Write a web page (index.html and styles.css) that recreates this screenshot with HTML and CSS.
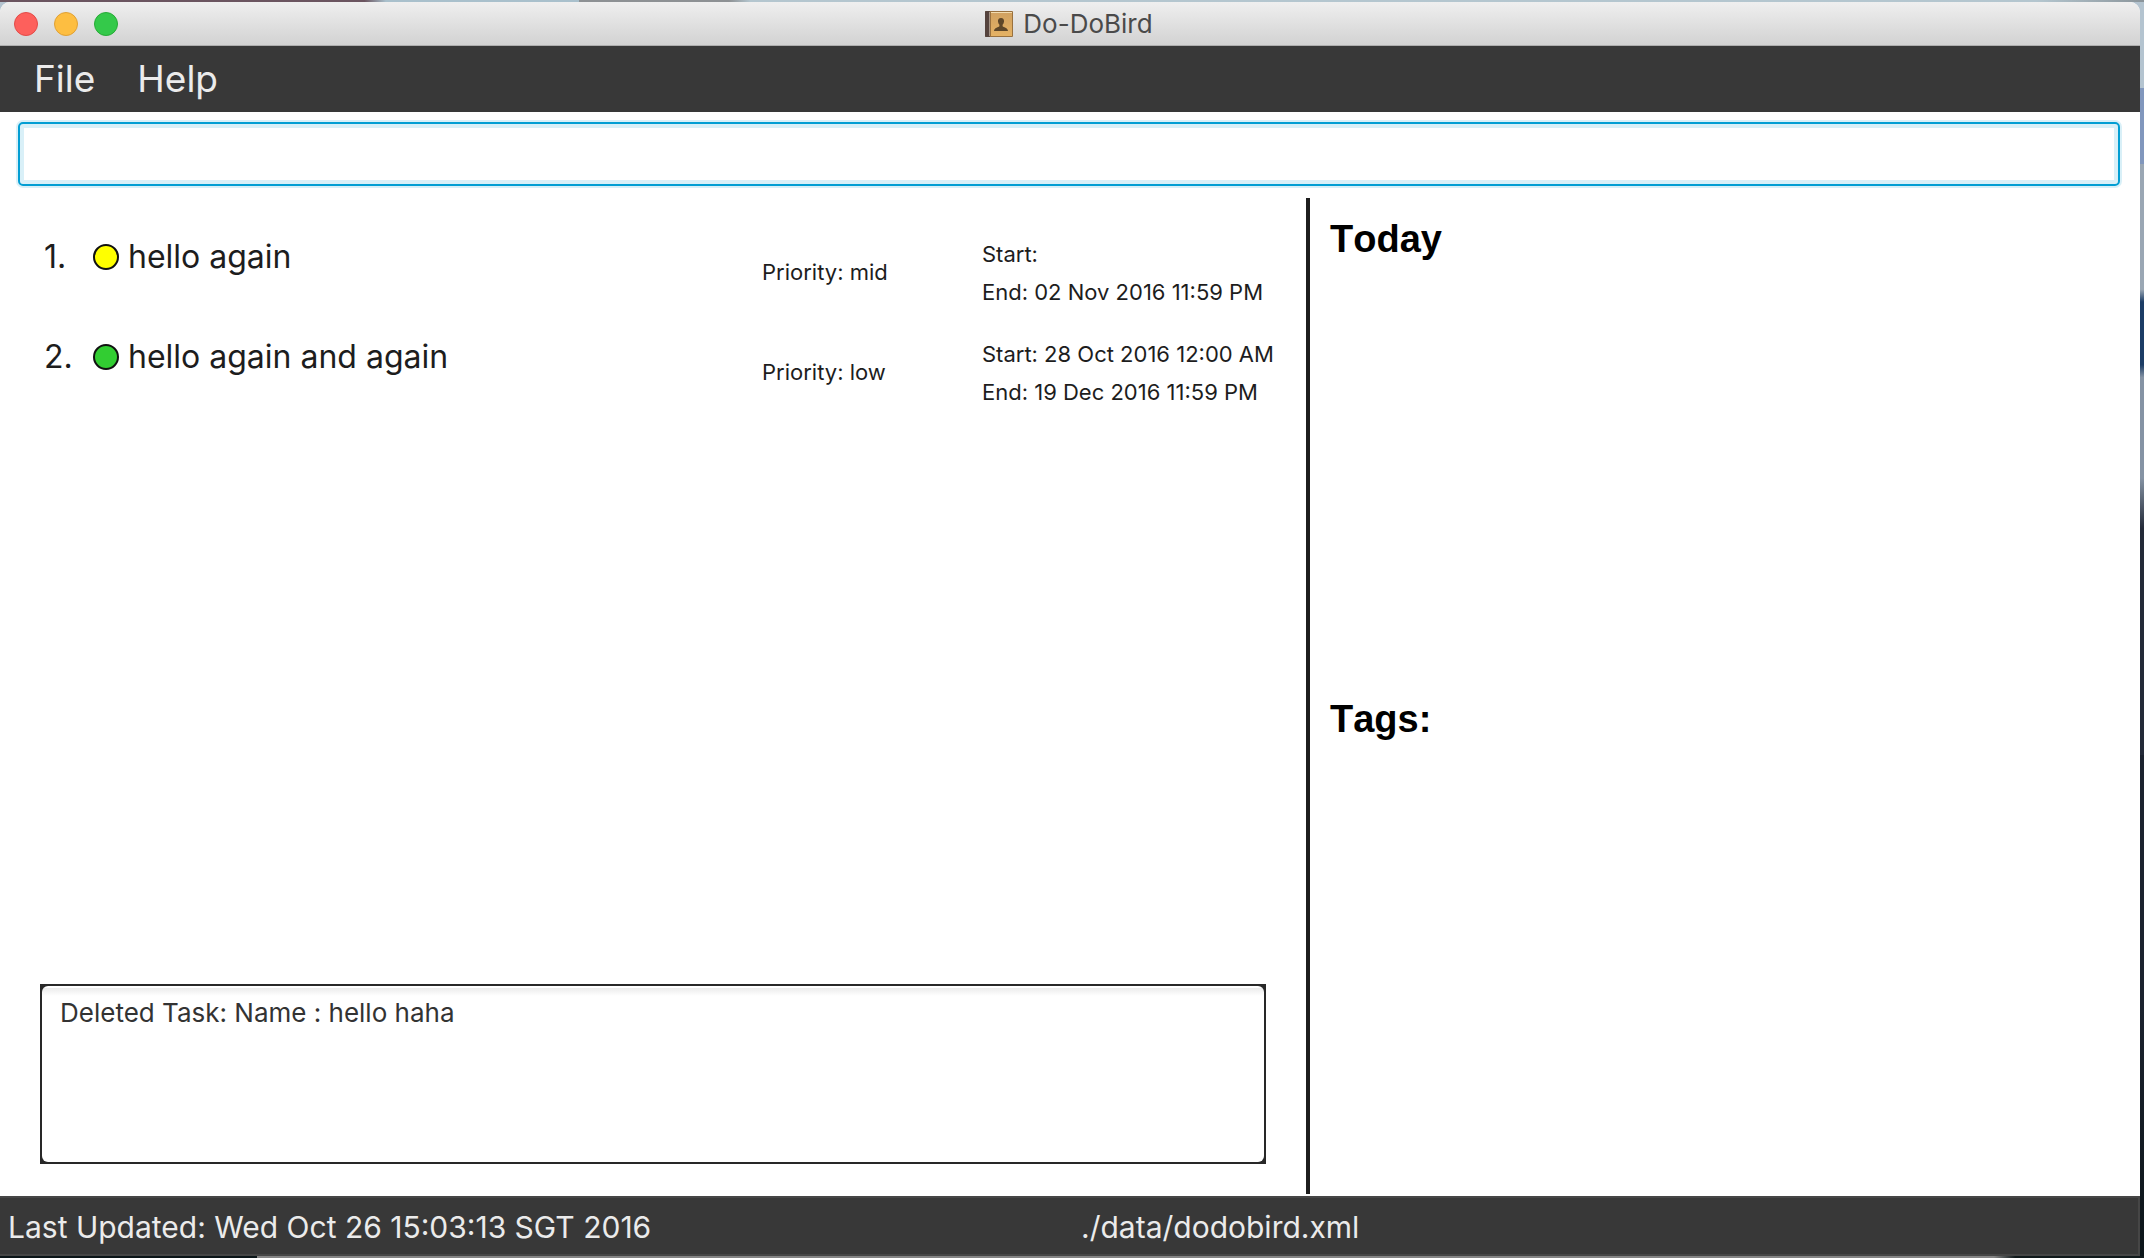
FILE: index.html
```html
<!DOCTYPE html>
<html lang="en">
<head>
<meta charset="utf-8">
<title>Do-DoBird</title>
<link rel="stylesheet" href="styles.css">
</head>
<body class="desktop">
<div class="window">
  <header class="titlebar">
    <div class="controls">
      <button class="control close" type="button" aria-label="Close"></button>
      <button class="control minimise" type="button" aria-label="Minimise"></button>
      <button class="control zoom" type="button" aria-label="Zoom"></button>
    </div>
    <div class="caption">
      <svg class="app-icon" viewBox="0 0 28 27" aria-hidden="true">
        <defs>
          <linearGradient id="cover" x1="0" y1="0" x2="0" y2="1">
            <stop offset="0" stop-color="#d0a161"/>
            <stop offset="1" stop-color="#e5b264"/>
          </linearGradient>
        </defs>
        <rect x="0" y="0" width="28" height="26" rx="1" fill="#99713e"/>
        <rect x="0" y="0" width="5" height="26" rx="1" fill="#55433d"/>
        <rect x="4" y="1" width="1" height="24" fill="#a39285"/>
        <rect x="6" y="1" width="21" height="24" fill="url(#cover)"/>
        <rect x="6" y="1" width="21" height="1" fill="#f2dcb0"/>
        <path d="M16 7c2.200 0 3.300 1.500 3 3.700-.2 1.300-.7 2.300-1.400 3v1.500c.5 1 5.400 1.300 5.400 4.800H9c0-3.500 4.900-3.800 5.400-4.800v-1.500c-.7-.7-1.200-1.700-1.400-3C12.700 8.500 13.800 7 16 7z" fill="#5e4729"/>
      </svg>
      <span>Do-DoBird</span>
    </div>
  </header>
  <nav class="menubar">
    <button class="menu" type="button">File</button>
    <button class="menu" type="button">Help</button>
  </nav>
  <div class="command">
    <input class="command-box" type="text" aria-label="Command">
  </div>
  <main class="content">
    <section class="tasks">
      <ol class="task-list">
        <li class="task">
          <span class="number">1.</span>
          <span class="name"><i class="dot mid"></i>hello again</span>
          <span class="priority">Priority: mid</span>
          <span class="dates"><span>Start:</span><span>End: 02 Nov 2016 11:59 PM</span></span>
        </li>
        <li class="task">
          <span class="number">2.</span>
          <span class="name"><i class="dot low"></i>hello again and again</span>
          <span class="priority">Priority: low</span>
          <span class="dates"><span>Start: 28 Oct 2016 12:00 AM</span><span>End: 19 Dec 2016 11:59 PM</span></span>
        </li>
      </ol>
      <div class="result">
        <div class="result-frame">
          <textarea class="result-box" readonly aria-label="Result">Deleted Task: Name : hello haha</textarea>
        </div>
      </div>
    </section>
    <aside class="sidebar">
      <section><h2 class="heading">Today</h2></section>
      <section><h2 class="heading">Tags:</h2></section>
    </aside>
  </main>
  <footer class="statusbar">
    <span>Last Updated: Wed Oct 26 15:03:13 SGT 2016</span>
    <span>./data/dodobird.xml</span>
  </footer>
</div>
</body>
</html>
```
FILE: styles.css
```css
* {
  box-sizing: border-box;
}

.desktop {
  margin: 0;
  min-height: 100vh;
  display: flex;
  padding: 2px 4px 2px 0;
  font-family: Inter, "Liberation Sans", sans-serif;
  color: #1d1d1d;
  background:
    linear-gradient(90deg, #6b5560 0 17%, #a9c0cc 18% 27%, #8d9194 27% 34%, #b4c6cf 35% 95%, #8b959b) top / 100% 2px no-repeat,
    linear-gradient(90deg, #0b1518 0 12%, #858585 12% 93%, #10191b 94%) bottom / 100% 2px no-repeat,
    linear-gradient(#b4c4d0 0 7%, #8197bd 7% 13%, #9aa7b4 13% 23%, #1c3d66 24% 29%, #8593a4 30% 38%, #232a38 42% 60%, #1b222e 60% 80%, #0c1519);
}

.window {
  flex: 1;
  display: flex;
  flex-direction: column;
  background: #fff;
  border-radius: 10px 10px 0 0;
  overflow: hidden;
}

.titlebar {
  display: grid;
  grid-template-columns: 1fr auto 1fr;
  align-items: center;
  height: 44px;
  padding: 0 16px 0 14px;
  background: linear-gradient(#efefef, #d2d2d2);
  border-bottom: 1px solid #aeaeae;
}

.controls {
  display: flex;
  gap: 16px;
}

.control {
  width: 24px;
  height: 24px;
  padding: 0;
  border: 1px solid #e24b48;
  border-radius: 50%;
  background: #fd605c;
}

.minimise {
  border-color: #dfa035;
  background: #fdbe41;
}

.zoom {
  border-color: #27aa37;
  background: #34c94a;
}

.caption {
  display: flex;
  align-items: center;
  gap: 10px;
  padding-top: 1px;
  font-size: 26px;
  line-height: 32px;
  color: #4a4a4a;
}

.app-icon {
  width: 28px;
  height: 27px;
}

.menubar {
  display: flex;
  gap: 42px;
  height: 66px;
  padding: 0 34px;
  background: #383838;
}

.menu {
  padding: 0;
  border: 0;
  background: none;
  font: inherit;
  font-size: 37px;
  line-height: 66px;
  color: #ebebeb;
}

.command {
  padding: 10px 20px 12px 18px;
}

.command-box {
  display: block;
  width: 100%;
  height: 64px;
  padding: 0 16px;
  border: 2px solid #039ed3;
  border-radius: 5px;
  outline: 0;
  background: #fff;
  box-shadow: 0 0 0 2px #d9f0f8, inset 0 0 0 4px #d9f0f8;
  font: inherit;
  font-size: 32px;
}

.content {
  flex: 1;
  display: grid;
  grid-template-columns: 1310fr 830fr;
  padding-bottom: 2px;
}

.tasks {
  display: flex;
  flex-direction: column;
  justify-content: space-between;
  border-right: 4px solid #1d1d1d;
}

.task-list {
  margin: 0;
  padding: 37px 0 0 44px;
  list-style: none;
}

.task {
  display: grid;
  grid-template-columns: 49px 1fr 220px 324px;
  height: 100px;
}

.number,
.name {
  font-size: 32px;
  line-height: 44px;
}

.name {
  display: flex;
  align-items: center;
  align-self: start;
  gap: 9px;
}

.dot {
  width: 26px;
  height: 26px;
  border: 2px solid #111;
  border-radius: 50%;
}

.mid {
  background: #ffff00;
}

.low {
  background: #32cd32;
}

.priority,
.dates {
  font-size: 22px;
  line-height: 38px;
}

.priority {
  padding-top: 18px;
}

.dates {
  display: flex;
  flex-direction: column;
}

.result {
  padding: 0 40px 30px;
}

.result-frame {
  padding: 2px;
  background: #282828;
}

.result-box {
  display: block;
  width: 100%;
  height: 176px;
  padding: 11px 18px;
  border: 0;
  border-radius: 6px;
  outline: 0;
  resize: none;
  background: linear-gradient(#fff 0 2px, #ebebeb 2px, #fff 10px);
  font: inherit;
  font-size: 26px;
  line-height: 32px;
  color: #333;
}

.sidebar {
  display: grid;
  grid-template-rows: 480fr 516fr;
  padding-left: 20px;
}

.heading {
  margin: 0;
  padding-top: 18px;
  font-family: "Liberation Sans", Arial, sans-serif;
  font-size: 38px;
  font-weight: bold;
  font-kerning: none;
  line-height: 46px;
  color: #000;
}

.statusbar {
  display: grid;
  grid-template-columns: 1fr 1fr;
  column-gap: 16px;
  height: 60px;
  padding: 1px 0 0 8px;
  border: 2px solid #464646;
  border-left: 0;
  background: #383838;
  font-size: 30px;
  line-height: 56px;
  color: #ebebeb;
}
```
